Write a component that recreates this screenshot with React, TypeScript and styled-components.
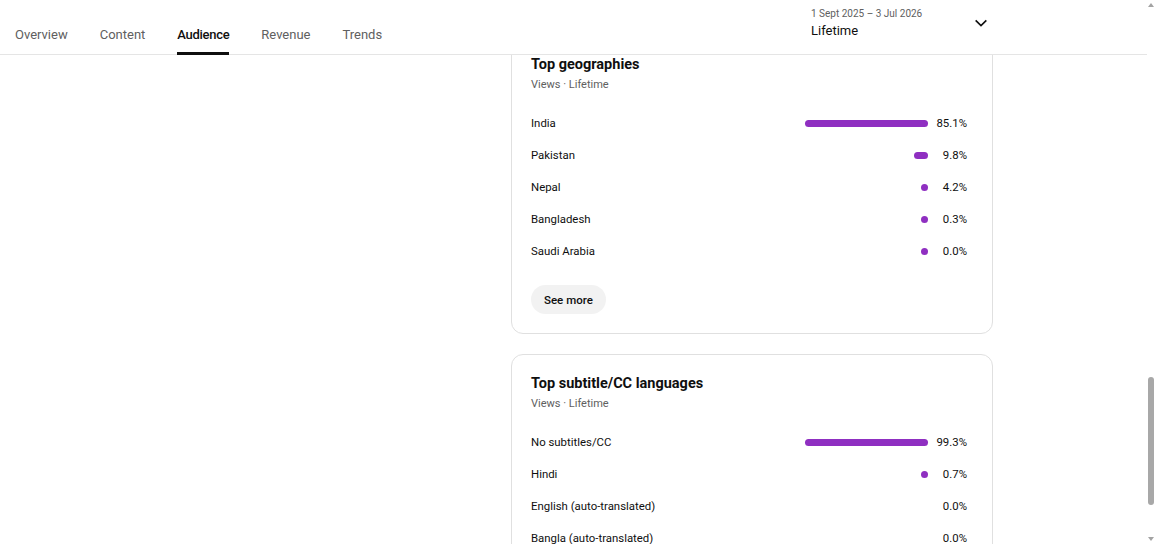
import React from 'react';
import styled, { createGlobalStyle } from 'styled-components';

interface Stat {
    label: string;
    value: number;
    dot: boolean;
}

const geographies: Stat[] = [
    { label: 'India', value: 85.1, dot: true },
    { label: 'Pakistan', value: 9.8, dot: true },
    { label: 'Nepal', value: 4.2, dot: true },
    { label: 'Bangladesh', value: 0.3, dot: true },
    { label: 'Saudi Arabia', value: 0.0, dot: true },
];

const subtitles: Stat[] = [
    { label: 'No subtitles/CC', value: 99.3, dot: true },
    { label: 'Hindi', value: 0.7, dot: true },
    { label: 'English (auto-translated)', value: 0.0, dot: false },
    { label: 'Bangla (auto-translated)', value: 0.0, dot: false },
];

const tabs = ['Overview', 'Content', 'Audience', 'Revenue', 'Trends'];

const GlobalStyle = createGlobalStyle`
    html, body {
        margin: 0;
        padding: 0;
        background: #fff;
        overflow: hidden;
    }
    body {
        font-family: Roboto, "Noto Sans", Arial, sans-serif;
        color: #0f0f0f;
    }
`;

const Page = styled.div`
    display: flex;
    width: 1155px;
    height: 544px;
    overflow: hidden;
`;

const Main = styled.div`
    flex: 1;
    display: flex;
    flex-direction: column;
    min-width: 0;
`;

const Header = styled.header`
    position: relative;
    z-index: 2;
    height: 54px;
    border-bottom: 1px solid #e5e5e5;
    background: #fff;
    display: flex;
    align-items: flex-end;
    justify-content: space-between;
    flex-shrink: 0;
`;

const Tabs = styled.nav`
    display: flex;
    gap: 32px;
    padding-left: 15px;
`;

const Tab = styled.div<{ $active?: boolean }>`
    font-size: 13px;
    font-weight: ${(p) => (p.$active ? 500 : 400)};
    letter-spacing: ${(p) => (p.$active ? '-0.3px' : '0')};
    color: ${(p) => (p.$active ? '#0f0f0f' : '#606060')};
    padding-bottom: 10px;
    border-bottom: 3px solid ${(p) => (p.$active ? '#0f0f0f' : 'transparent')};
    margin-bottom: -1px;
    line-height: 15px;
`;

const DateSelect = styled.div`
    width: 182px;
    margin-right: 154px;
    align-self: stretch;
    display: flex;
    align-items: center;
    justify-content: space-between;
    padding-bottom: 9px;
    padding-right: 4px;
    box-sizing: border-box;
`;

const DateText = styled.div`
    display: flex;
    flex-direction: column;
    gap: 3px;
`;

const DateRange = styled.span`
    font-size: 10px;
    color: #606060;
    line-height: 12px;
`;

const DateLabel = styled.span`
    font-size: 13px;
    color: #0f0f0f;
    line-height: 15px;
`;

const Content = styled.div`
    flex: 1;
    overflow: hidden;
    display: grid;
    grid-template-columns: 511px 482px 1fr;
`;

const Column = styled.div`
    grid-column: 2;
    display: flex;
    flex-direction: column;
    gap: 20px;
    margin-top: -20px;
`;

const Card = styled.section`
    border: 1px solid #e0e0e0;
    border-radius: 12px;
    padding: 19px 25px 19px 19px;
    background: #fff;
`;

const CardTitle = styled.h2`
    margin: 0;
    font-size: 14.5px;
    font-weight: 700;
    line-height: 20px;
    color: #0f0f0f;
`;

const CardSub = styled.div`
    font-size: 11px;
    color: #606060;
    line-height: 14px;
    margin-top: 3px;
`;

const Rows = styled.div`
    margin-top: 15px;
    display: flex;
    flex-direction: column;
`;

const Row = styled.div`
    height: 32px;
    display: flex;
    align-items: center;
    font-size: 11.4px;
`;

const Label = styled.span`
    flex: 1;
    color: #0f0f0f;
`;

const Track = styled.div`
    width: 123px;
    height: 7px;
    display: flex;
    justify-content: flex-end;
`;

const Bar = styled.div`
    height: 7px;
    min-width: 7px;
    border-radius: 4px;
    background: #8f2fc1;
`;

const Pct = styled.span`
    width: 39px;
    text-align: right;
    color: #0f0f0f;
`;

const SeeMore = styled.button`
    margin-top: 18px;
    height: 29px;
    padding: 0 13px;
    border: none;
    border-radius: 15px;
    background: #f2f2f2;
    font-family: inherit;
    font-size: 11.5px;
    font-weight: 500;
    color: #0f0f0f;
`;

const Scrollbar = styled.div`
    width: 8px;
    display: flex;
    flex-direction: column;
    align-items: center;
    justify-content: space-between;
    padding: 3px 0;
    box-sizing: border-box;
    position: relative;
`;

const Arrow = styled.div<{ $down?: boolean }>`
    width: 0;
    height: 0;
    border-left: 3px solid transparent;
    border-right: 3px solid transparent;
    ${(p) => (p.$down ? 'border-top: 4px solid #a3a3a3;' : 'border-bottom: 4px solid #a3a3a3;')}
`;

const Thumb = styled.div`
    position: absolute;
    top: 377px;
    left: 1px;
    width: 6px;
    height: 128px;
    border-radius: 3px;
    background: #a8a8a8;
`;

const StatList: React.FC<{ items: Stat[] }> = ({ items }) => {
    const max = Math.max(...items.map((i) => i.value));
    return (
        <Rows>
            {items.map((s) => (
                <Row key={s.label}>
                    <Label>{s.label}</Label>
                    <Track>
                        {s.dot && <Bar style={{ width: `${(s.value / max) * 123}px` }} />}
                    </Track>
                    <Pct>{s.value.toFixed(1)}%</Pct>
                </Row>
            ))}
        </Rows>
    );
};

export default function App() {
    return (
        <>
            <GlobalStyle />
            <Page>
                <Main>
                    <Header>
                        <Tabs>
                            {tabs.map((t) => (
                                <Tab key={t} $active={t === 'Audience'}>
                                    {t}
                                </Tab>
                            ))}
                        </Tabs>
                        <DateSelect>
                            <DateText>
                                <DateRange>1 Sept 2025 – 3 Jul 2026</DateRange>
                                <DateLabel>Lifetime</DateLabel>
                            </DateText>
                            <svg width="16" height="16" viewBox="0 0 24 24">
                                <path d="M4 8l8 8 8-8" fill="none" stroke="#0f0f0f" strokeWidth="2.4" />
                            </svg>
                        </DateSelect>
                    </Header>
                    <Content>
                        <Column>
                            <Card>
                                <CardTitle>Top geographies</CardTitle>
                                <CardSub>Views · Lifetime</CardSub>
                                <StatList items={geographies} />
                                <SeeMore>See more</SeeMore>
                            </Card>
                            <Card>
                                <CardTitle>Top subtitle/CC languages</CardTitle>
                                <CardSub>Views · Lifetime</CardSub>
                                <StatList items={subtitles} />
                            </Card>
                        </Column>
                    </Content>
                </Main>
                <Scrollbar>
                    <Arrow />
                    <Thumb />
                    <Arrow $down />
                </Scrollbar>
            </Page>
        </>
    );
}
